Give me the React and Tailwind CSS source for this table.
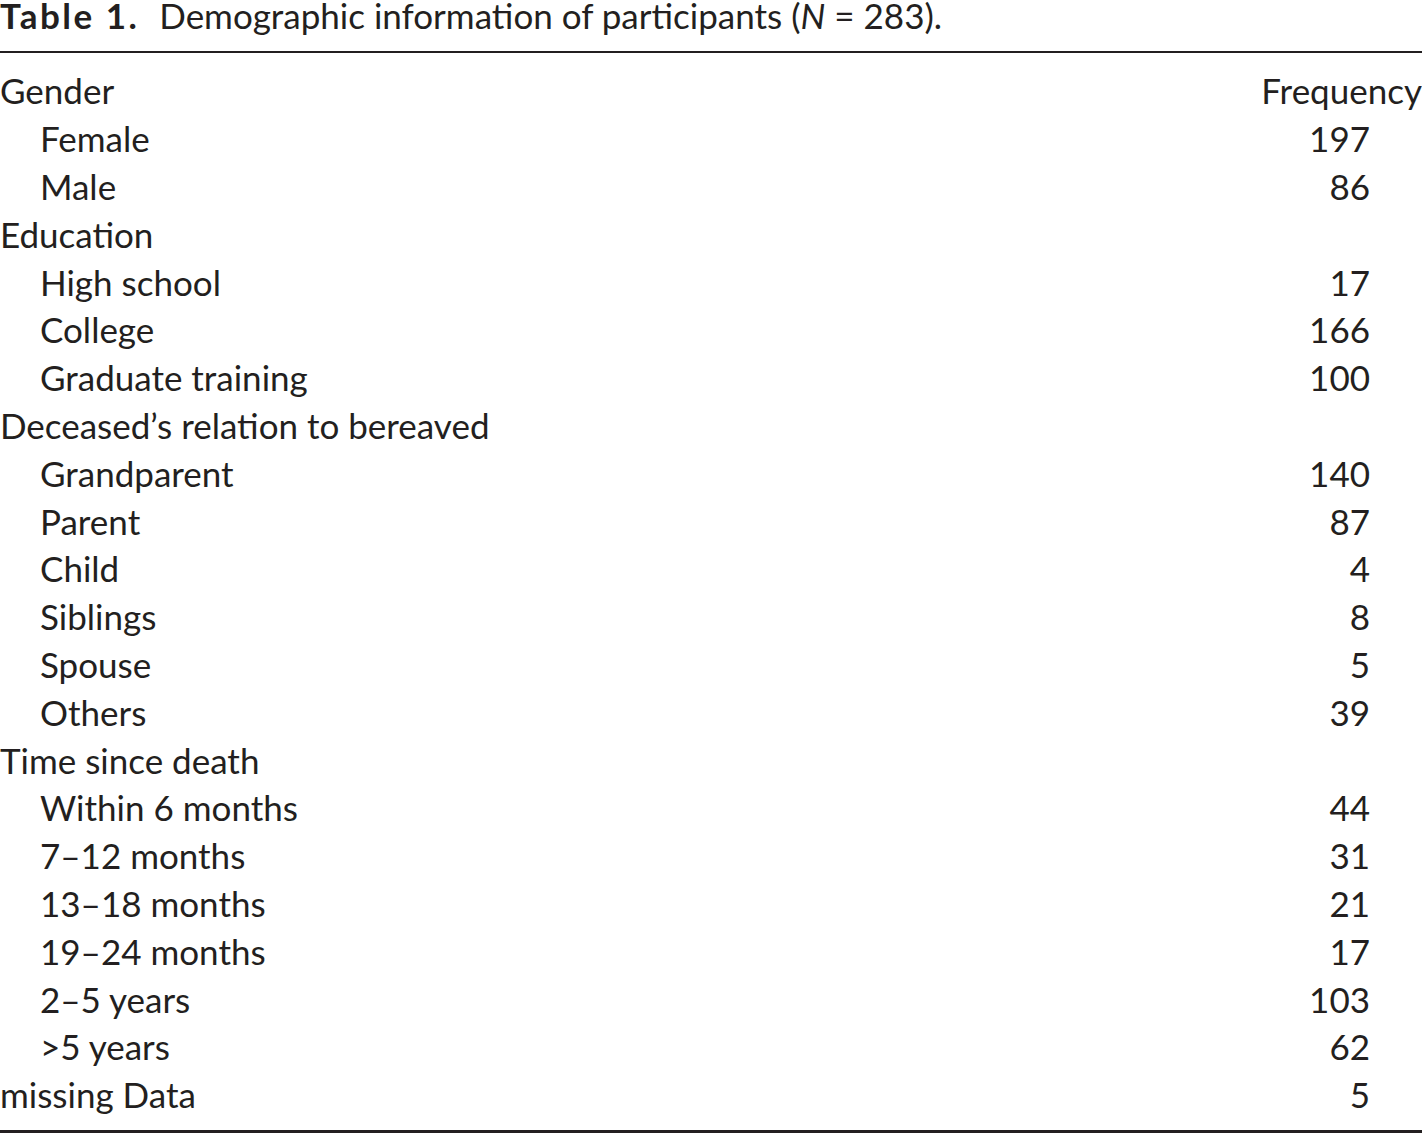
const rows = [
  { label: "Gender", head: true, value: "Frequency" },
  { label: "Female", value: "197" },
  { label: "Male", value: "86" },
  { label: "Education", head: true },
  { label: "High school", value: "17" },
  { label: "College", value: "166" },
  { label: "Graduate training", value: "100" },
  { label: "Deceased’s relation to bereaved", head: true },
  { label: "Grandparent", value: "140" },
  { label: "Parent", value: "87" },
  { label: "Child", value: "4" },
  { label: "Siblings", value: "8" },
  { label: "Spouse", value: "5" },
  { label: "Others", value: "39" },
  { label: "Time since death", head: true },
  { label: "Within 6 months", value: "44" },
  { label: "7–12 months", value: "31" },
  { label: "13–18 months", value: "21" },
  { label: "19–24 months", value: "17" },
  { label: "2–5 years", value: "103" },
  { label: ">5 years", value: "62" },
  { label: "missing Data", head: true, value: "5" },
];

export default function App() {
  return (
    <div className="w-[1422px] h-[1134px] bg-white text-[#231f20] font-['Lato',sans-serif] text-[35px] leading-none">
      <div className="flex h-[31px] items-start whitespace-nowrap">
        <span className="inline-block h-[31px] leading-[31px] font-bold tracking-[2.5px]">
          Table 1.
        </span>
        <span className="ml-[20px] inline-block h-[31px] leading-[31px]">
          Demographic information of participants (<i>N</i> = 283).
        </span>
      </div>
      <div className="mt-[20px] h-[2px] bg-[#231f20]" />
      <div className="pt-[14px] pb-[11px]">
        {rows.map((r, i) => (
          <div key={i} className="flex h-[47.8px] items-center justify-between">
            <span className={r.head ? "" : "pl-[40px]"}>{r.label}</span>
            {r.value && (
              <span className={i === 0 ? "" : "pr-[52px]"}>{r.value}</span>
            )}
          </div>
        ))}
      </div>
      <div className="h-[3px] bg-[#231f20]" />
    </div>
  );
}
